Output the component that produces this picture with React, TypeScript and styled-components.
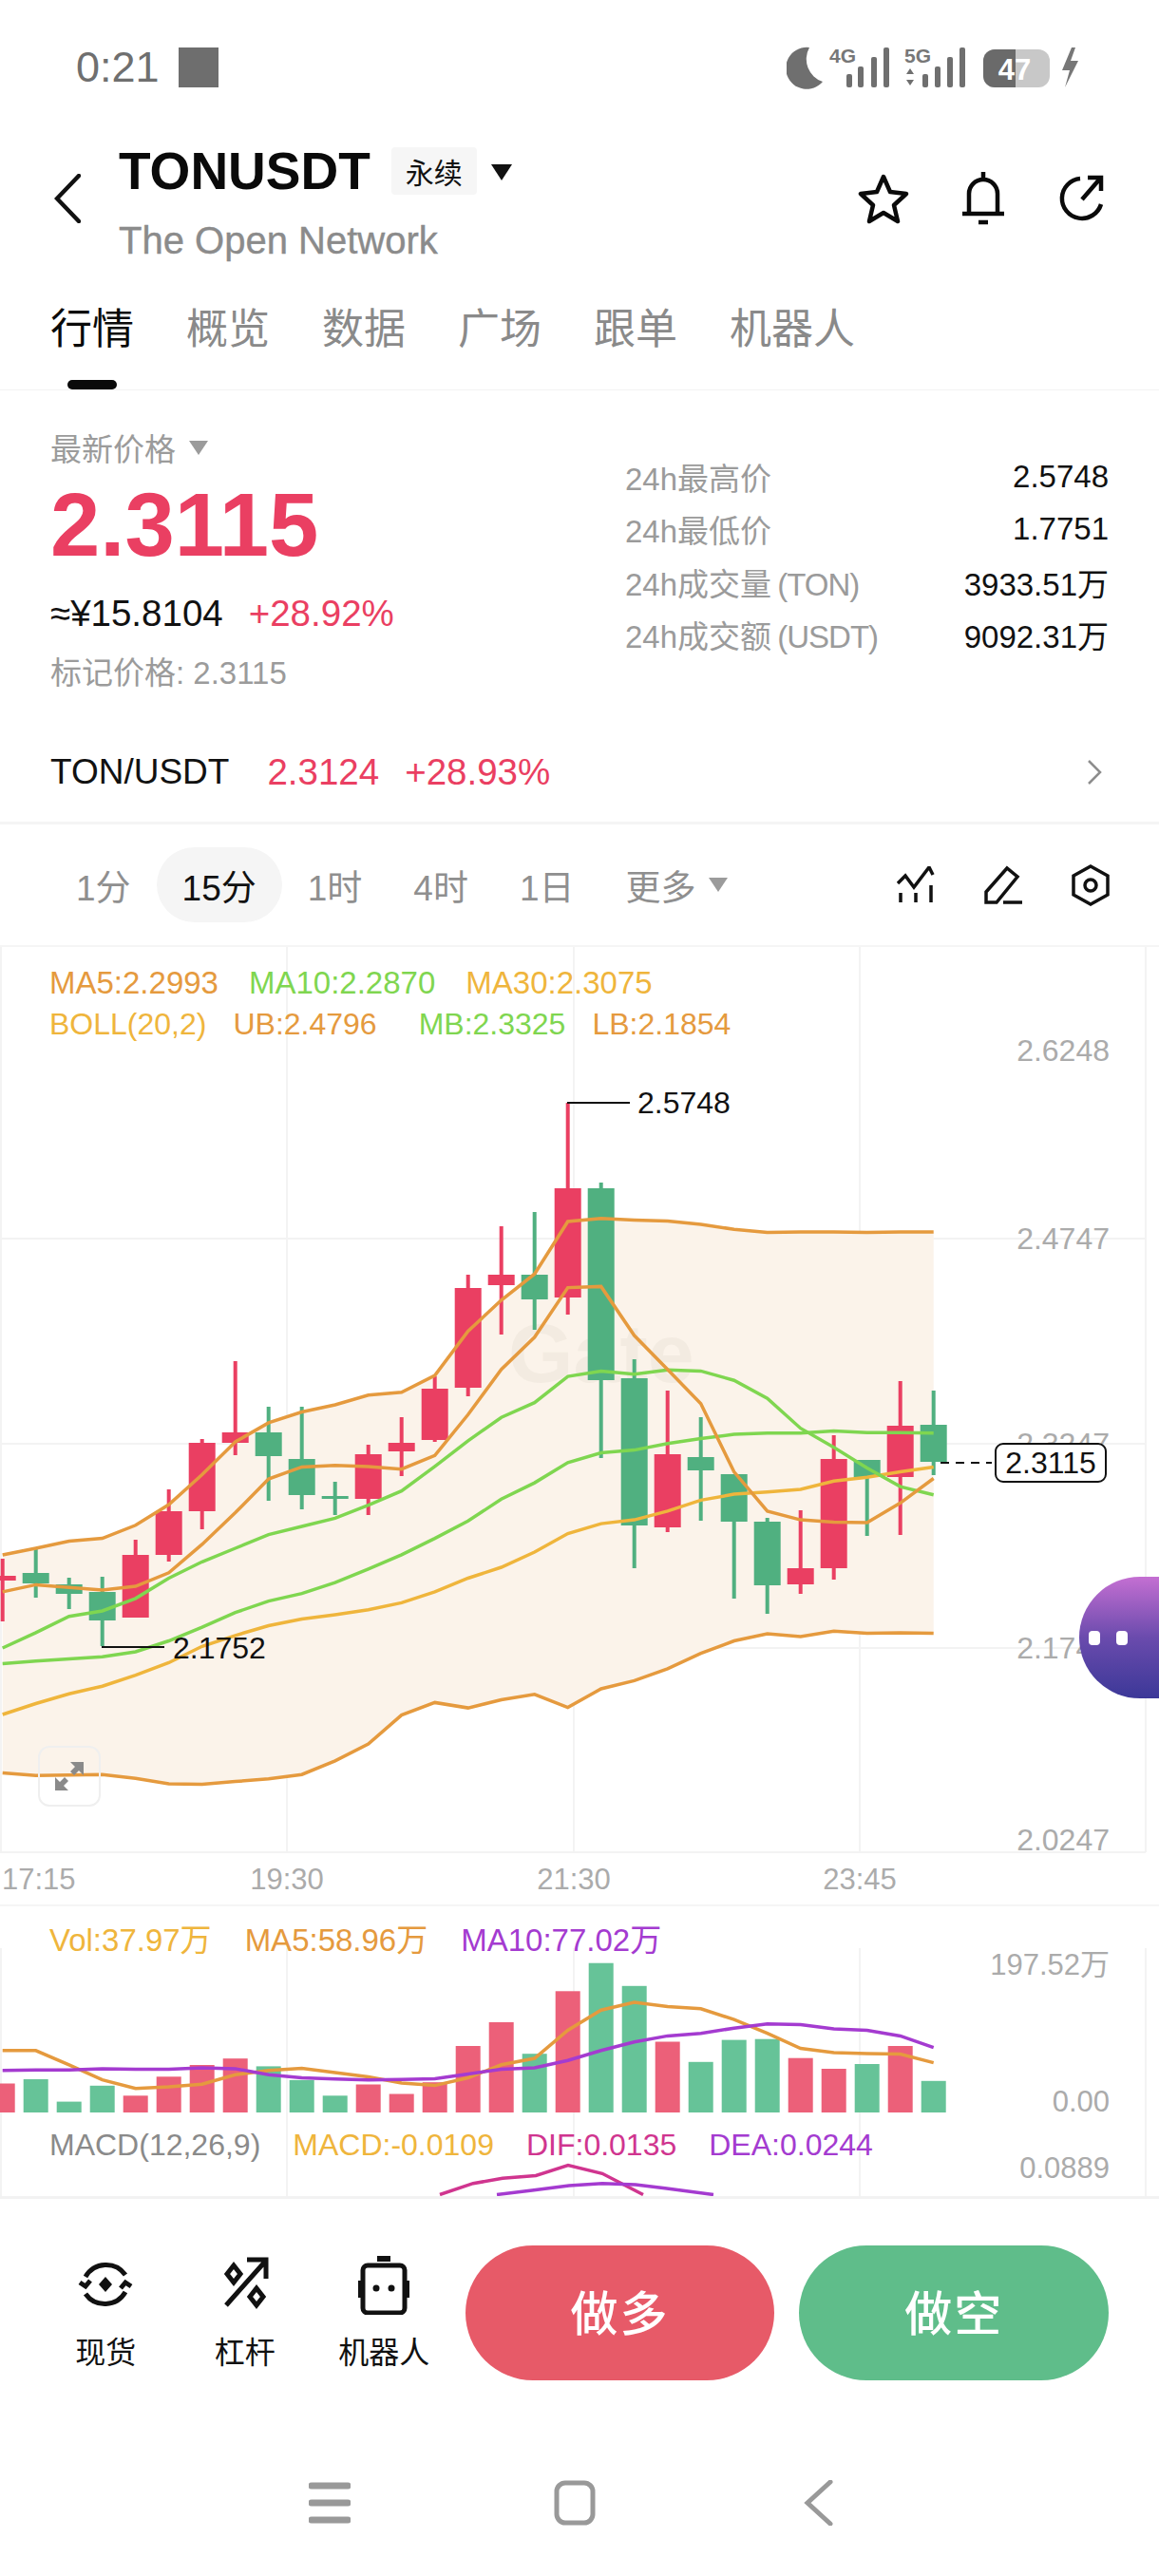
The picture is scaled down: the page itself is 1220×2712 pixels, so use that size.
import * as React from "react";
import styled, { createGlobalStyle } from "styled-components";

const SANS = `"Liberation Sans", "Noto Sans CJK SC", sans-serif`;

const C = {
  red: "#ea3f62",
  green: "#50b080",
  orange: "#e59a3e",
  lime: "#7fd650",
  yellow: "#efb53c",
  purple: "#a43bd0",
  magenta: "#d0358f",
  grey: "#9b9b9b",
  axis: "#ababab",
  grid: "#f3f3f3",
};

const GlobalStyle = createGlobalStyle`
  html, body { margin: 0; padding: 0; background: #fff; }
  body { font-family: ${SANS}; }
`;

const Page = styled.div`
  position: relative;
  display: flex;
  flex-direction: column;
  width: 1220px;
  height: 2712px;
  overflow: hidden;
  background: #fff;
  color: #111;
`;

/* ---------- status bar ---------- */
const StatusBar = styled.div`
  display: flex;
  align-items: center;
  justify-content: space-between;
  height: 142px;
  padding: 0 82px 0 80px;
  box-sizing: border-box;
  flex: none;
`;
const StatusLeft = styled.div`
  display: flex;
  align-items: center;
  gap: 20px;
`;
const Clock = styled.span`
  font-size: 45px;
  color: #6f6f6f;
`;
const StatusSquare = styled.div`
  width: 42px;
  height: 42px;
  background: #6e6e6e;
`;

/* ---------- header ---------- */
const Header = styled.div`
  display: flex;
  align-items: center;
  height: 148px;
  padding: 0 57px 0 57px;
  flex: none;
`;
const BackSvg = styled.svg`
  margin-bottom: 14px;
  flex: none;
`;
const TitleBlock = styled.div`
  display: flex;
  flex-direction: column;
  margin-left: 40px;
  flex: 1;
`;
const TitleRow = styled.div`
  display: flex;
  align-items: center;
  height: 72px;
`;
const Symbol = styled.span`
  font-size: 55px;
  font-weight: 700;
  color: #0a0a0a;
`;
const Badge = styled.span`
  display: flex;
  align-items: center;
  justify-content: center;
  width: 90px;
  height: 50px;
  margin-left: 22px;
  border-radius: 4px;
  background: #f6f6f6;
  font-size: 30px;
`;
const Caret = styled.span<{ $w: number; $h: number; $color: string }>`
  width: 0;
  height: 0;
  border-left: ${(p) => p.$w / 2}px solid transparent;
  border-right: ${(p) => p.$w / 2}px solid transparent;
  border-top: ${(p) => p.$h}px solid ${(p) => p.$color};
`;
const BadgeCaret = styled(Caret)`
  margin-left: 15px;
  margin-top: 2px;
`;
const Subtitle = styled.div`
  height: 72px;
  line-height: 74px;
  font-size: 40px;
  color: #8b8b8b;
  -webkit-text-stroke: 0.4px #8b8b8b;
`;
const HeaderIcons = styled.div`
  display: flex;
  align-items: center;
  gap: 55px;
  margin-bottom: 14px;
`;

/* ---------- tabs ---------- */
const Tabs = styled.div`
  display: flex;
  gap: 55px;
  height: 121px;
  padding: 28px 0 0 53px;
  box-sizing: border-box;
  border-bottom: 1px solid #f2f2f2;
  flex: none;
`;
const Tab = styled.div<{ $active?: boolean }>`
  display: flex;
  flex-direction: column;
  align-items: center;
  font-size: 44px;
  line-height: 58px;
  color: ${(p) => (p.$active ? "#0a0a0a" : "#8a8a8a")};
`;
const TabMark = styled.div`
  width: 52px;
  height: 10px;
  margin-top: 24px;
  border-radius: 5px;
  background: #0a0a0a;
`;

/* ---------- quote ---------- */
const Quote = styled.div`
  display: flex;
  justify-content: space-between;
  height: 350px;
  padding: 38px 53px 0;
  box-sizing: border-box;
  flex: none;
`;
const QuoteLeft = styled.div`
  display: flex;
  flex-direction: column;
`;
const PriceLabel = styled.div`
  display: flex;
  align-items: center;
  gap: 14px;
  height: 44px;
  font-size: 33px;
  color: ${C.grey};
`;
const BigPrice = styled.div`
  margin-top: 10px;
  height: 100px;
  line-height: 100px;
  font-size: 94px;
  font-weight: 700;
  color: ${C.red};
`;
const TickerLine = styled.div`
  display: flex;
  gap: 27px;
  margin-top: 18px;
  line-height: 50px;
  font-size: 38.5px;
`;
const Up = styled.span`
  color: ${C.red};
`;
const MarkLine = styled.div`
  margin-top: 16px;
  line-height: 44px;
  font-size: 33px;
  color: ${C.grey};
`;
const Stats = styled.div`
  width: 509px;
  padding-top: 25px;
`;
const StatRow = styled.div`
  display: flex;
  align-items: center;
  justify-content: space-between;
  height: 55.5px;
  font-size: 33px;
`;
const StatLabel = styled.span`
  color: ${C.grey};
  word-spacing: -3px;
`;
const StatUnit = styled.span`
  letter-spacing: -1px;
`;
const StatValue = styled.span`
  color: #111;
`;

const PairRow = styled.div`
  display: flex;
  align-items: center;
  height: 104px;
  padding: 0 60px 0 53px;
  font-size: 38.5px;
  border-bottom: 3px solid #f5f5f5;
  flex: none;
`;
const PairName = styled.span`
  margin-right: 40px;
  font-size: 37px;
`;
const PairChange = styled(Up)`
  margin-left: 27px;
  flex: 1;
`;

/* ---------- interval row ---------- */
const IntervalRow = styled.div`
  display: flex;
  align-items: center;
  height: 127px;
  padding: 0 52px 0 53px;
  border-bottom: 2px solid #f5f5f5;
  box-sizing: content-box;
  flex: none;
`;
const Interval = styled.div<{ $active?: boolean }>`
  display: flex;
  align-items: center;
  gap: 14px;
  height: 79px;
  padding: 0 27px;
  border-radius: 40px;
  font-size: 37px;
  color: ${(p) => (p.$active ? "#111" : "#8f8f8f")};
  background: ${(p) => (p.$active ? "#f5f5f5" : "transparent")};
`;
const ToolIcons = styled.div`
  display: flex;
  align-items: center;
  gap: 52px;
  margin-left: auto;
`;

/* ---------- chart ---------- */
const ChartPanel = styled.div`
  position: relative;
  height: 1008px;
  flex: none;
`;
const VolPanel = styled.div`
  position: relative;
  height: 305px;
  border-top: 2px solid #f5f5f5;
  border-bottom: 3px solid #f2f2f2;
  flex: none;
`;
const PanelSvg = styled.svg`
  display: block;
  width: 1220px;
  height: 100%;
`;
const Legend = styled.div<{ $top: number; $gap: number; $size: number }>`
  position: absolute;
  top: ${(p) => p.$top}px;
  left: 52px;
  display: flex;
  gap: ${(p) => p.$gap}px;
  font-size: ${(p) => p.$size}px;
  line-height: 40px;
`;
const LegendItem = styled.span<{ $color: string; $push?: number }>`
  color: ${(p) => p.$color};
  margin-left: ${(p) => p.$push ?? 0}px;
`;
const ExpandButton = styled.div`
  position: absolute;
  left: 40px;
  top: 841px;
  display: flex;
  align-items: center;
  justify-content: center;
  width: 62px;
  height: 60px;
  border: 2px solid #efefef;
  border-radius: 12px;
`;
const Bot = styled.div`
  position: absolute;
  left: 1136px;
  top: 1660px;
  display: flex;
  align-items: center;
  gap: 17px;
  width: 84px;
  height: 128px;
  padding-left: 10px;
  box-sizing: border-box;
  border-radius: 64px 0 0 64px / 64px 0 0 64px;
  background: linear-gradient(180deg, #c46fd2 0%, #6a4bad 50%, #3c3898 100%);
`;
const BotEye = styled.span`
  width: 12px;
  height: 15px;
  border-radius: 4px;
  background: #fff;
`;

/* ---------- actions ---------- */
const ActionBar = styled.div`
  display: flex;
  align-items: center;
  height: 143px;
  margin-top: 48px;
  padding: 0 53px 0 0;
  flex: none;
`;
const Shortcut = styled.div`
  display: flex;
  flex-direction: column;
  align-items: center;
  width: 146.5px;
  font-size: 32px;
  color: #111;
`;
const ShortcutIcon = styled.div`
  height: 60px;
  margin-bottom: 16px;
  margin-top: 2px;
`;
const Shortcuts = styled.div`
  display: flex;
  width: 490px;
  padding-left: 38px;
  box-sizing: border-box;
`;
const TradeButton = styled.div<{ $bg: string }>`
  display: flex;
  align-items: center;
  justify-content: center;
  width: 326px;
  height: 142px;
  padding-bottom: 6px;
  box-sizing: border-box;
  border-radius: 71px;
  background: ${(p) => p.$bg};
  color: #fff;
  font-size: 50px;
  font-weight: 500;
  letter-spacing: 2px;
`;
const TradeGap = styled.div`
  width: 26px;
`;

const NavBar = styled.div`
  display: flex;
  align-items: center;
  justify-content: center;
  gap: 214px;
  height: 48px;
  margin-top: 105px;
  padding-right: 18px;
  flex: none;
`;

/* ---------- data ---------- */
const cx = (i: number) => 2.7 + 35 * i;

type Candle = [number, number, number, number, boolean];
// wick top, wick bottom, body top, body bottom, up
const candles: Candle[] = [
  [1642, 1708, 1660, 1665, true],
  [1632, 1683, 1657, 1668, false],
  [1662, 1695, 1669, 1679, false],
  [1661, 1734, 1677, 1707, false],
  [1622, 1704, 1638, 1704, true],
  [1569, 1645, 1592, 1638, true],
  [1516, 1611, 1520, 1592, true],
  [1434, 1533, 1509, 1520, true],
  [1482, 1581, 1509, 1534, false],
  [1482, 1590, 1537, 1575, false],
  [1561, 1596, 1576, 1579, false],
  [1522, 1596, 1532, 1579, true],
  [1493, 1555, 1520, 1529, true],
  [1450, 1519, 1463, 1517, true],
  [1343, 1471, 1357, 1462, true],
  [1292, 1406, 1343, 1354, true],
  [1277, 1401, 1343, 1369, false],
  [1162, 1385, 1252, 1367, true],
  [1246, 1536, 1252, 1454, false],
  [1432, 1652, 1452, 1607, false],
  [1465, 1614, 1532, 1609, true],
  [1493, 1602, 1535, 1549, false],
  [1553, 1684, 1553, 1603, false],
  [1599, 1700, 1603, 1670, false],
  [1591, 1679, 1652, 1669, true],
  [1512, 1664, 1537, 1652, true],
  [1538, 1618, 1538, 1556, false],
  [1455, 1617, 1502, 1556, true],
  [1465, 1554, 1501, 1540, false],
];

const bandUpper = [1638, 1631, 1623.5, 1620.6, 1606.8, 1585, 1553.5, 1519, 1498.9, 1487.5, 1480, 1469.7, 1466.8, 1449, 1402.5, 1369.8, 1342.2, 1287, 1283.7, 1285.4, 1286.6, 1290, 1295.2, 1298.6, 1298, 1298, 1298.6, 1298, 1298];
const bandLower = [1867.4, 1870.3, 1869.7, 1869.2, 1873.2, 1878.9, 1879.5, 1876.6, 1873.8, 1869.2, 1854.8, 1837, 1806.6, 1793.4, 1799.1, 1790.5, 1784.8, 1798.6, 1779, 1770.4, 1757.8, 1741.7, 1728.5, 1721.1, 1723.9, 1718.2, 1720.5, 1719.9, 1720.5];
const ma5 = [1676.9, 1669.4, 1672.3, 1675.1, 1671.1, 1656.8, 1626.9, 1593.6, 1558, 1545.4, 1543.7, 1544.9, 1547.7, 1533.4, 1490.3, 1442.7, 1408.8, 1356.6, 1355.4, 1407.1, 1442.7, 1478.8, 1550.6, 1591.9, 1601.1, 1603.4, 1604, 1583.3, 1557.5];
const ma10 = [1736, 1719.9, 1702.7, 1697, 1683.8, 1662.5, 1645.3, 1631, 1616.6, 1608, 1599.4, 1585.6, 1570.7, 1544.9, 1517.9, 1493.2, 1477.7, 1450.1, 1444.4, 1447.8, 1443.3, 1444.4, 1454.2, 1473.1, 1504.7, 1524.8, 1546.6, 1566.1, 1574.7];
const mb = [1752.6, 1749.8, 1747.5, 1745.2, 1740, 1728.5, 1714.2, 1698.7, 1686.6, 1678.6, 1667.1, 1652.8, 1637.8, 1620.6, 1602.3, 1579.3, 1562.1, 1540.8, 1530.5, 1527.6, 1520.7, 1515.6, 1511, 1509.8, 1509.8, 1507.5, 1509.3, 1509.3, 1509.8];
const ma30 = [1806, 1794.5, 1784.2, 1776.2, 1764.7, 1751.5, 1734.3, 1722.8, 1712.5, 1705.6, 1701, 1695.8, 1688.4, 1676.9, 1662.5, 1651, 1635, 1615.5, 1605.1, 1601.1, 1591.9, 1580.4, 1574.1, 1571.8, 1569, 1560.3, 1556.3, 1550.6, 1545.4];

const volTops: [number, boolean][] = [
  [2194.5, true], [2190, false], [2213.6, false], [2196.8, false], [2207.3, true], [2187.3, true],
  [2175, true], [2168.2, true], [2176.4, false], [2190.9, false], [2207.3, false], [2195.5, true],
  [2205.5, true], [2193.2, true], [2155, true], [2130, true], [2163.2, false], [2097.3, true],
  [2067.7, false], [2091.8, false], [2150.5, true], [2171.8, false], [2148.6, false], [2147.7, false],
  [2167.7, true], [2179, true], [2174, false], [2155, true], [2191.8, false],
];
const volMa5 = [2159.8, 2159.8, 2174.8, 2190.7, 2199.8, 2198, 2195.3, 2185.3, 2180.7, 2178.5, 2183, 2187.5, 2193.9, 2196.6, 2188.5, 2174.8, 2168, 2138.5, 2117.2, 2109, 2113.5, 2115.8, 2127.1, 2141.7, 2157.6, 2162.1, 2163, 2163.5, 2172.6];
const volMa10 = [2180.7, 2180.3, 2180.3, 2178.9, 2179.4, 2179.4, 2178, 2178.9, 2185.3, 2188.5, 2189.8, 2190.7, 2190.3, 2189.4, 2184.4, 2179.4, 2178, 2170.3, 2159.8, 2150.8, 2144.4, 2141.7, 2136.2, 2131.7, 2132.6, 2137.1, 2138.5, 2144.4, 2156.7];

const toPoints = (ys: number[]) => ys.map((y, i) => `${cx(i).toFixed(1)},${y}`).join(" ");

const hLines = [1305, 1521, 1736];
const vLines = [1, 302, 604, 905, 1206];

function AxisText(props: { y: number; children: React.ReactNode }) {
  return (
    <text x={1168} y={props.y} textAnchor="end" fontSize={32} fill={C.axis}>
      {props.children}
    </text>
  );
}

function KLineChart() {
  const band = toPoints(bandUpper) + " " + [...bandLower].map((y, i) => `${cx(i).toFixed(1)},${y}`).reverse().join(" ");
  return (
    <PanelSvg viewBox="0 998 1220 1008" fontFamily={SANS}>
      {hLines.map((y) => (
        <line key={y} x1={0} x2={1206} y1={y} y2={y} stroke={C.grid} strokeWidth={2} />
      ))}
      {vLines.map((x) => (
        <line key={x} x1={x} x2={x} y1={998} y2={1951} stroke={C.grid} strokeWidth={2} />
      ))}
      <line x1={0} x2={1206} y1={1951} y2={1951} stroke={C.grid} strokeWidth={2} />
      <polygon points={band} fill="#fbf3ea" />
      <text x={535} y={1456} fontSize={88} fontWeight={700} fill="#f3ebe1">Gate</text>

      <AxisText y={1118}>2.6248</AxisText>
      <AxisText y={1316}>2.4747</AxisText>
      <AxisText y={1532}>2.3247</AxisText>
      <AxisText y={1747}>2.1747</AxisText>
      <AxisText y={1949}>2.0247</AxisText>

      {candles.map(([wt, wb, bt, bb, up], i) => (
        <g key={i} fill={up ? C.red : C.green}>
          <rect x={cx(i) - 2} y={wt} width={4} height={wb - wt} />
          <rect x={cx(i) - 14} y={bt} width={28} height={bb - bt} />
        </g>
      ))}

      <polyline points={toPoints(ma30)} fill="none" stroke={C.yellow} strokeWidth={3.5} />
      <polyline points={toPoints(mb)} fill="none" stroke={C.lime} strokeWidth={3.5} />
      <polyline points={toPoints(ma10)} fill="none" stroke={C.lime} strokeWidth={3.5} />
      <polyline points={toPoints(ma5)} fill="none" stroke={C.orange} strokeWidth={3.5} />
      <polyline points={toPoints(bandUpper)} fill="none" stroke={C.orange} strokeWidth={3.5} />
      <polyline points={toPoints(bandLower)} fill="none" stroke={C.orange} strokeWidth={3.5} />

      <line x1={597} x2={663} y1={1162} y2={1162} stroke="#111" strokeWidth={2} />
      <text x={671} y={1173} fontSize={32} fill="#111">2.5748</text>
      <line x1={107} x2={173} y1={1735} y2={1735} stroke="#111" strokeWidth={2} />
      <text x={182} y={1747} fontSize={32} fill="#111">2.1752</text>

      <line x1={990} x2={1044} y1={1541} y2={1541} stroke="#111" strokeWidth={2} strokeDasharray="9 7" />
      <rect x={1048} y={1521} width={116} height={40} rx={8} fill="#fff" stroke="#111" strokeWidth={2} />
      <text x={1106} y={1552} textAnchor="middle" fontSize={32} fill="#111">2.3115</text>

      <text x={2} y={1990} fontSize={31} fill={C.axis}>17:15</text>
      <text x={302} y={1990} textAnchor="middle" fontSize={31} fill={C.axis}>19:30</text>
      <text x={604} y={1990} textAnchor="middle" fontSize={31} fill={C.axis}>21:30</text>
      <text x={905} y={1990} textAnchor="middle" fontSize={31} fill={C.axis}>23:45</text>
    </PanelSvg>
  );
}

function VolumeChart() {
  return (
    <PanelSvg viewBox="0 2008 1220 305" fontFamily={SANS}>
      {vLines.map((x) => (
        <line key={x} x1={x} x2={x} y1={2052} y2={2313} stroke={C.grid} strokeWidth={2} />
      ))}
      {volTops.map(([top, up], i) => (
        <rect key={i} x={cx(i) - 13} y={top} width={26} height={2225 - top} fill={up ? "#ec6079" : "#66c398"} />
      ))}
      <polyline points={toPoints(volMa5)} fill="none" stroke={C.orange} strokeWidth={3.5} />
      <polyline points={toPoints(volMa10)} fill="none" stroke={C.purple} strokeWidth={3.5} />
      <polyline points="463,2311.5 498,2299.7 529,2294.3 564,2291.5 598,2280.6 634,2289.3 677,2311.5" fill="none" stroke={C.magenta} strokeWidth={3.5} />
      <polyline points="523,2311.5 560,2307 599,2302 634,2299.7 669,2301 700,2304.7 751,2311.5" fill="none" stroke={C.purple} strokeWidth={3.5} />
      <text x={1168} y={2080} textAnchor="end" fontSize={31} fill={C.axis}>197.52万</text>
      <text x={1168} y={2224} textAnchor="end" fontSize={31} fill={C.axis}>0.00</text>
      <text x={1168} y={2294} textAnchor="end" fontSize={31} fill={C.axis}>0.0889</text>
    </PanelSvg>
  );
}

/* ---------- icons ---------- */
const StatusIcons = () => (
  <svg width="310" height="46" viewBox="828 48 310 46" fontFamily={SANS}>
    <path d="M866 86a22 22 0 1 1-14-36a25 25 0 0 0 14 36z" fill="#6f6f6f" />
    <text x="873" y="66" fontSize="21" fontWeight="700" fill="#777">4G</text>
    <g fill="#6f6f6f">
      <rect x="891" y="78" width="6" height="14" rx="2" />
      <rect x="903" y="70" width="6" height="22" rx="2" />
      <rect x="917" y="60" width="6" height="32" rx="2" />
      <rect x="930" y="50" width="6" height="42" rx="2" />
    </g>
    <text x="952" y="66" fontSize="21" fontWeight="700" fill="#777">5G</text>
    <g fill="#6f6f6f">
      <path d="M958 72l4 6h-8zM958 90l4-6h-8z" />
      <rect x="971" y="78" width="6" height="14" rx="2" />
      <rect x="984" y="70" width="6" height="22" rx="2" />
      <rect x="997" y="60" width="6" height="32" rx="2" />
      <rect x="1010" y="50" width="6" height="42" rx="2" />
    </g>
    <rect x="1035" y="52" width="70" height="40" rx="12" fill="#c8c8c8" />
    <path d="M1047 52h22v40h-22a12 12 0 0 1-12-12v-16a12 12 0 0 1 12-12z" fill="#6a6a6a" />
    <text x="1068" y="84" textAnchor="middle" fontSize="31" fontWeight="700" fill="#fff">47</text>
    <path d="M1128 50l-10 24h8l-5 18 14-28h-8l5-14z" fill="#777" />
  </svg>
);

const BackIcon = () => (
  <BackSvg width="28" height="52" viewBox="0 0 28 52">
    <path d="M26 2L3 26l23 24" fill="none" stroke="#111" strokeWidth="4.5" strokeLinecap="round" />
  </BackSvg>
);
const StarIcon = () => (
  <svg width="54" height="54" viewBox="0 0 54 54">
    <path d="M27 4l7 16 17 2-13 12 4 17-15-9-15 9 4-17L3 22l17-2z" fill="none" stroke="#0a0a0a" strokeWidth="4.5" strokeLinejoin="round" />
  </svg>
);
const BellIcon = () => (
  <svg width="46" height="58" viewBox="0 0 46 58">
    <path d="M23 1v6M8 45V24a15 15 0 0 1 30 0v21M1 45h44M18 54h10" fill="none" stroke="#0a0a0a" strokeWidth="4.5" />
  </svg>
);
const ShareIcon = () => (
  <svg width="50" height="54" viewBox="0 0 50 54">
    <path d="M24 6a21 21 0 1 0 22 27" fill="none" stroke="#0a0a0a" strokeWidth="4.5" />
    <path d="M26 28L45 6M32 5h14v14" fill="none" stroke="#0a0a0a" strokeWidth="4.5" />
  </svg>
);
const ChevronRight = () => (
  <svg width="16" height="28" viewBox="0 0 16 28">
    <path d="M2 2l12 12L2 26" fill="none" stroke="#8d8d8d" strokeWidth="2.5" />
  </svg>
);
const IndicatorIcon = () => (
  <svg width="40" height="40" viewBox="0 0 40 40" stroke="#111" strokeWidth="3.5" fill="none">
    <path d="M1 18l8-8 9 12L34 1l4 8" />
    <path d="M4 28v10M20 28v10M36 20v18" />
  </svg>
);
const PenIcon = () => (
  <svg width="40" height="42" viewBox="0 0 40 42" stroke="#111" strokeWidth="3.5" fill="none">
    <path d="M2 28L24 3l11 9L13 39H2zM20 39h20" />
  </svg>
);
const HexIcon = () => (
  <svg width="40" height="44" viewBox="0 0 40 44" stroke="#111" strokeWidth="3.5" fill="none">
    <path d="M20 2l18 10v20L20 42 2 32V12z" />
    <circle cx="20" cy="22" r="6" />
  </svg>
);
const ExpandIcon = () => (
  <svg width="32" height="32" viewBox="0 0 32 32" fill="#8a8a8a">
    <path d="M31 1v14l-5-5-5 5-4-4 5-5-5-5zM1 31V17l5 5 5-5 4 4-5 5 5 5z" />
  </svg>
);
const SpotIcon = () => (
  <svg width="58" height="60" viewBox="0 0 58 60" fill="none" stroke="#111" strokeWidth="5">
    <path d="M8 22A25 25 0 0 1 50 20M50 38A25 25 0 0 1 8 40M2 28l6 4 5-6M56 32l-6-4-5 6" />
    <path d="M29 22l7 8-7 8-7-8z" fill="#111" stroke="none" />
  </svg>
);
const LeverIcon = () => (
  <svg width="52" height="60" viewBox="0 0 52 60" fill="none" stroke="#111" strokeWidth="5">
    <path d="M6 52L47 6M28 4h20v20" />
    <path d="M14 10l7 9-7 9-7-9zM38 34l7 9-7 9-7-9z" />
  </svg>
);
const RobotIcon = () => (
  <svg width="54" height="62" viewBox="0 0 54 62">
    <rect x="20" y="0" width="14" height="6" fill="#111" />
    <rect x="5" y="10" width="44" height="50" rx="5" fill="none" stroke="#111" strokeWidth="5" />
    <path d="M2 26v18M52 26v18" stroke="#111" strokeWidth="4" />
    <circle cx="19" cy="34" r="3.5" fill="#111" />
    <circle cx="35" cy="34" r="3.5" fill="#111" />
  </svg>
);
const NavMenu = () => (
  <svg width="44" height="48" viewBox="0 0 44 48" stroke="#999" strokeWidth="7" strokeLinecap="round">
    <path d="M3 6h38M3 24h38M3 42h38" />
  </svg>
);
const NavHome = () => (
  <svg width="44" height="48" viewBox="0 0 44 48">
    <rect x="3" y="3" width="38" height="42" rx="9" fill="none" stroke="#999" strokeWidth="5" />
  </svg>
);
const NavBack = () => (
  <svg width="36" height="48" viewBox="0 0 36 48">
    <path d="M33 2L9 24l24 22" fill="none" stroke="#999" strokeWidth="5" strokeLinecap="round" />
  </svg>
);

const tabs = ["行情", "概览", "数据", "广场", "跟单", "机器人"];
const stats: [string, string, string][] = [
  ["24h最高价", "", "2.5748"],
  ["24h最低价", "", "1.7751"],
  ["24h成交量 ", "(TON)", "3933.51万"],
  ["24h成交额 ", "(USDT)", "9092.31万"],
];

export default function App() {
  return (
    <Page>
      <GlobalStyle />
      <StatusBar>
        <StatusLeft>
          <Clock>0:21</Clock>
          <StatusSquare />
        </StatusLeft>
        <StatusIcons />
      </StatusBar>

      <Header>
        <BackIcon />
        <TitleBlock>
          <TitleRow>
            <Symbol>TONUSDT</Symbol>
            <Badge>永续</Badge>
            <BadgeCaret $w={23} $h={17} $color="#111" />
          </TitleRow>
          <Subtitle>The Open Network</Subtitle>
        </TitleBlock>
        <HeaderIcons>
          <StarIcon />
          <BellIcon />
          <ShareIcon />
        </HeaderIcons>
      </Header>

      <Tabs>
        {tabs.map((t, i) => (
          <Tab key={t} $active={i === 0}>
            {t}
            {i === 0 && <TabMark />}
          </Tab>
        ))}
      </Tabs>

      <Quote>
        <QuoteLeft>
          <PriceLabel>
            最新价格
            <Caret $w={20} $h={15} $color="#9b9b9b" />
          </PriceLabel>
          <BigPrice>2.3115</BigPrice>
          <TickerLine>
            <span>≈¥15.8104</span>
            <Up>+28.92%</Up>
          </TickerLine>
          <MarkLine>标记价格: 2.3115</MarkLine>
        </QuoteLeft>
        <Stats>
          {stats.map(([k, unit, v]) => (
            <StatRow key={k}>
              <StatLabel>
                {k}
                <StatUnit>{unit}</StatUnit>
              </StatLabel>
              <StatValue>{v}</StatValue>
            </StatRow>
          ))}
        </Stats>
      </Quote>

      <PairRow>
        <PairName>TON/USDT</PairName>
        <Up>2.3124</Up>
        <PairChange>+28.93%</PairChange>
        <ChevronRight />
      </PairRow>

      <IntervalRow>
        <Interval>1分</Interval>
        <Interval $active>15分</Interval>
        <Interval>1时</Interval>
        <Interval>4时</Interval>
        <Interval>1日</Interval>
        <Interval>
          更多
          <Caret $w={20} $h={15} $color="#9b9b9b" />
        </Interval>
        <ToolIcons>
          <IndicatorIcon />
          <PenIcon />
          <HexIcon />
        </ToolIcons>
      </IntervalRow>

      <ChartPanel>
        <KLineChart />
        <Legend $top={18} $gap={32} $size={33}>
          <LegendItem $color={C.orange}>MA5:2.2993</LegendItem>
          <LegendItem $color={C.lime}>MA10:2.2870</LegendItem>
          <LegendItem $color={C.yellow}>MA30:2.3075</LegendItem>
        </Legend>
        <Legend $top={61} $gap={28} $size={32}>
          <LegendItem $color={C.yellow}>BOLL(20,2)</LegendItem>
          <LegendItem $color={C.orange}>UB:2.4796</LegendItem>
          <LegendItem $color={C.lime} $push={16}>MB:2.3325</LegendItem>
          <LegendItem $color={C.orange}>LB:2.1854</LegendItem>
        </Legend>
        <ExpandButton>
          <ExpandIcon />
        </ExpandButton>
      </ChartPanel>

      <VolPanel>
        <VolumeChart />
        <Legend $top={16} $gap={35} $size={33}>
          <LegendItem $color={C.yellow}>Vol:37.97万</LegendItem>
          <LegendItem $color={C.orange}>MA5:58.96万</LegendItem>
          <LegendItem $color={C.purple}>MA10:77.02万</LegendItem>
        </Legend>
        <Legend $top={231} $gap={34} $size={32}>
          <LegendItem $color="#8a8a8a">MACD(12,26,9)</LegendItem>
          <LegendItem $color={C.yellow}>MACD:-0.0109</LegendItem>
          <LegendItem $color={C.magenta}>DIF:0.0135</LegendItem>
          <LegendItem $color={C.purple}>DEA:0.0244</LegendItem>
        </Legend>
      </VolPanel>

      <ActionBar>
        <Shortcuts>
          <Shortcut>
            <ShortcutIcon><SpotIcon /></ShortcutIcon>
            现货
          </Shortcut>
          <Shortcut>
            <ShortcutIcon><LeverIcon /></ShortcutIcon>
            杠杆
          </Shortcut>
          <Shortcut>
            <ShortcutIcon><RobotIcon /></ShortcutIcon>
            机器人
          </Shortcut>
        </Shortcuts>
        <TradeButton $bg="#e75a68">做多</TradeButton>
        <TradeGap />
        <TradeButton $bg="#5fbd8a">做空</TradeButton>
      </ActionBar>

      <NavBar>
        <NavMenu />
        <NavHome />
        <NavBack />
      </NavBar>

      <Bot>
        <BotEye />
        <BotEye />
      </Bot>
    </Page>
  );
}
